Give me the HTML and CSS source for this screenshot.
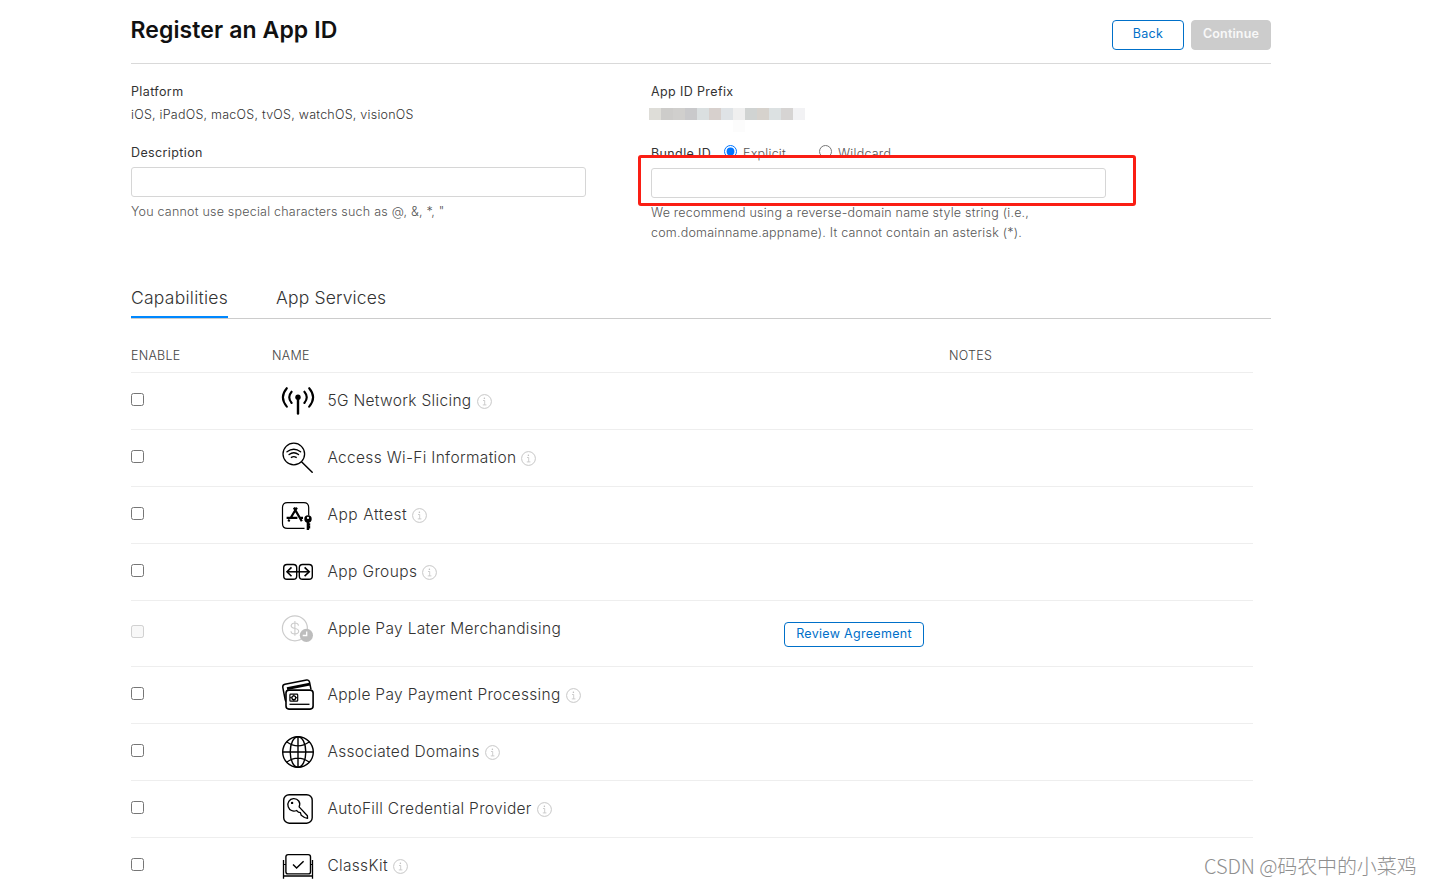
FILE: index.html
```html
<!DOCTYPE html>
<html lang="en">
<head>
    <meta charset="utf-8">
    <meta name="viewport" content="width=device-width, initial-scale=1">
    <title>Register an App ID</title>
    <link rel="stylesheet" href="styles.css">
</head>
<body>
    <svg class="defs" width="0" height="0">
        <symbol id="info" viewBox="0 0 15 15">
            <circle cx="7.5" cy="7.5" r="6.9" fill="none" stroke="#c6c6c6" stroke-width="1"/>
            <path d="M6 6.5h1.7v4.3M5.8 10.9h3.6" fill="none" stroke="#c0c0c0" stroke-width=".8"/>
            <circle cx="7.4" cy="4.2" r=".75" fill="#bbb"/>
        </symbol>
    </svg>

    <div class="container">
        <header class="header">
            <h1>Register an App ID</h1>
            <div class="buttons">
                <button class="btn btn-back">Back</button>
                <button class="btn btn-continue" disabled>Continue</button>
            </div>
        </header>

        <form class="form">
            <div class="col">
                <div class="label">Platform</div>
                <div class="value">iOS, iPadOS, macOS, tvOS, watchOS, visionOS</div>
                <div class="label-row"><label class="label" for="description">Description</label></div>
                <input class="text-input" type="text" id="description">
                <p class="hint">You cannot use special characters such as @, &amp;, *, "</p>
            </div>
            <div class="col">
                <div class="label">App ID Prefix</div>
                <div class="value mosaic">
                    <i class="m1"></i><i class="m2"></i><i class="m3"></i><i class="m4"></i><i class="m5"></i><i class="m6"></i><i class="m7"></i><i class="m8"></i><i class="m9"></i><i class="m10"></i><i class="m11"></i><i class="m12"></i><i class="m13"></i>
                </div>
                <div class="label-row bundle">
                    <span class="label">Bundle ID</span>
                    <input type="radio" name="bundle" id="explicit" checked><label for="explicit">Explicit</label>
                    <input type="radio" name="bundle" id="wildcard" class="wildcard"><label for="wildcard">Wildcard</label>
                </div>
                <div class="field">
                    <input class="text-input" type="text" id="bundleId">
                    <div class="marker"></div>
                </div>
                <p class="hint">We recommend using a reverse-domain name style string (i.e.,<br>com.domainname.appname). It cannot contain an asterisk (*).</p>
            </div>
        </form>

        <nav class="tabs">
            <a class="tab active">Capabilities</a>
            <a class="tab services">App Services</a>
        </nav>

        <div class="table">
            <div class="row head">
                <span>ENABLE</span>
                <span>NAME</span>
                <span></span>
                <span>NOTES</span>
            </div>

            <div class="row">
                <input type="checkbox">
                <svg class="icon" viewBox="0 0 34 34" fill="none" stroke="#000">
                    <path d="M5.8 4.2Q-2 13.3 5.8 22.6M10.6 7.7q-4.7 5.5 0 11.3M28.2 4.2q7.8 9.1 0 18.4M23.4 7.7q4.7 5.5 0 11.3" stroke-width="2.1" stroke-linecap="round"/>
                    <path d="M17 13v16.6" stroke-width="2.4" stroke-linecap="round"/>
                    <circle cx="17" cy="13.3" r="2.7" fill="#000" stroke="none"/>
                </svg>
                <div class="name">5G Network Slicing<svg class="info"><use href="#info"/></svg></div>
            </div>

            <div class="row">
                <input type="checkbox">
                <svg class="icon" viewBox="0 0 34 34" fill="none" stroke="#000">
                    <circle cx="12.8" cy="13" r="10.8" stroke-width="1.3"/>
                    <path d="M20.5 20.7 31.2 31.2" stroke-width="1.5" stroke-linecap="round"/>
                    <path d="M6 10.8q6.8-5 13.6 0M8.1 13.5q4.7-3.4 9.4 0M10.4 16.4q2.4-1.6 4.8 0" stroke-width="1.4" stroke-linecap="round"/>
                </svg>
                <div class="name">Access Wi-Fi Information<svg class="info"><use href="#info"/></svg></div>
            </div>

            <div class="row">
                <input type="checkbox">
                <svg class="icon" viewBox="0 0 34 34" fill="none" stroke="#000">
                    <path d="M27.7 17.6V9.5Q27.7 4.6 22.8 4.6H6.4Q1.5 4.6 1.5 9.5V25.5Q1.5 30.4 6.4 30.4H23.5" stroke-width="1.2"/>
                    <path d="M15.9 9.6 9.1 20.8M12.9 9.6 20.8 23.2M5.6 19.8H16.4M8.4 21.5 7.4 23.4M18.8 19.8H22" stroke-width="2.2"/>
                    <circle cx="27" cy="21" r="3.7" fill="#000" stroke="none"/>
                    <circle cx="27" cy="19.9" r="1.1" fill="#fff" stroke="none"/>
                    <path d="M26.9 23.7v8.2M27.5 26.5h1.7M27.5 29.3h1.7" stroke-width="2.4"/>
                </svg>
                <div class="name attest">App Attest<svg class="info"><use href="#info"/></svg></div>
            </div>

            <div class="row">
                <input type="checkbox">
                <svg class="icon" viewBox="0 0 34 34" fill="none" stroke="#000">
                    <rect x="2.7" y="9.5" width="13" height="14.8" rx="3.3" stroke-width="1.4"/>
                    <rect x="18.3" y="9.5" width="13" height="14.8" rx="3.3" stroke-width="1.4"/>
                    <path d="M6 16.8h22.2" stroke-width="1.5"/>
                    <path d="M10.5 12.4 6 16.8l4.5 4.4M23.6 12.4l4.6 4.4-4.6 4.4" stroke-width="1.6"/>
                </svg>
                <div class="name groups">App Groups<svg class="info"><use href="#info"/></svg></div>
            </div>

            <div class="row tall">
                <input type="checkbox" disabled>
                <svg class="icon" viewBox="0 0 34 34" fill="none" stroke="#ccc">
                    <circle cx="13.9" cy="16.3" r="12.5" stroke-width="1.2"/>
                    <path d="M17.6 13.6Q17.1 11 13.9 11T10.1 13.6Q10.1 15.8 13.9 16.5T17.7 19.3Q17.6 21.9 13.9 21.9T10 19.2M13.9 9.1V23.8" stroke-width="1.1"/>
                    <circle cx="25.4" cy="23.3" r="6.6" fill="#bdbdbd" stroke="none"/>
                    <path d="M25.7 19.4v4.1h-4" stroke="#fff" stroke-width="1.3"/>
                </svg>
                <div class="name">Apple Pay Later Merchandising</div>
                <button class="btn btn-review">Review Agreement</button>
            </div>

            <div class="row">
                <input type="checkbox">
                <svg class="icon" viewBox="0 .6 34 34" fill="none" stroke="#000">
                    <path d="M5.8 24.2Q4.5 24 4.2 22.4L1.8 9.9Q1.4 7.4 3.9 6.9L25.6 2.6Q28 2.2 28.5 4.6L30 12" stroke-width="1.5"/>
                    <path d="M6 11.2 28.8 6.7" stroke-width="3"/>
                    <rect x="5" y="12.7" width="27.1" height="19" rx="3" fill="#fff" stroke-width="1.6"/>
                    <path d="M8.5 26.9h20" stroke-width="1.3"/>
                    <rect x="8.9" y="16.8" width="7.8" height="7" rx=".8" stroke-width="1.2"/>
                    <path d="M9 20.3h1.8m4 0h1.8M12.8 17v1.7m0 3.2v1.8" stroke-width="1"/>
                    <circle cx="12.8" cy="20.3" r="1.9" stroke-width="1.3"/>
                </svg>
                <div class="name">Apple Pay Payment Processing<svg class="info"><use href="#info"/></svg></div>
            </div>

            <div class="row">
                <input type="checkbox">
                <svg class="icon" viewBox="0 0 34 34" fill="none" stroke="#000" stroke-width="1.4">
                    <circle cx="17" cy="17" r="15.3"/>
                    <ellipse cx="17" cy="17" rx="7.8" ry="15.3"/>
                    <path d="M17 1.7v30.6M1.7 17h30.6M5.5 6.8Q17 15 28.5 6.8M5.5 27.2Q17 19 28.5 27.2"/>
                </svg>
                <div class="name">Associated Domains<svg class="info"><use href="#info"/></svg></div>
            </div>

            <div class="row">
                <input type="checkbox">
                <svg class="icon" viewBox="0 0 34 34" fill="none" stroke="#000">
                    <rect x="2.7" y="2.7" width="28.5" height="28.5" rx="5.5" stroke-width="1.4"/>
                    <path d="M18.1 14.9C20.2 10.4 16.9 6.4 12.4 6.7C8.5 7 5.8 10.9 7.2 14.7C8.4 18.3 12.1 20 15.5 18.5L17.3 20.1 19.4 20.6 20.2 23.2 23.5 25.5 26.6 26.4 26.4 23.7Z" stroke-width="1.3" stroke-linejoin="round"/>
                    <circle cx="11.1" cy="10.9" r="1.2" fill="#000" stroke="none"/>
                </svg>
                <div class="name">AutoFill Credential Provider<svg class="info"><use href="#info"/></svg></div>
            </div>

            <div class="row">
                <input type="checkbox">
                <svg class="icon" viewBox="0 0 34 34" fill="none" stroke="#000">
                    <rect x="4.9" y="5.6" width="24.6" height="19.3" rx="2.2" stroke-width="1.4"/>
                    <path d="M2.5 11.1v18.6M31.5 11.1v18.6M2.5 27h29" stroke-width="1.3"/>
                    <path d="M2.5 15.5h2.4M29.5 15.5h2" stroke-width="1"/>
                    <path d="m12 15.5 3.6 3.5 7-6.7" stroke-width="1.5"/>
                </svg>
                <div class="name">ClassKit<svg class="info"><use href="#info"/></svg></div>
            </div>
        </div>
    </div>

    <div class="watermark">CSDN @码农中的小菜鸡</div>
</body>
</html>
```
FILE: styles.css
```css
* {
    box-sizing: border-box;
}
body {
    margin: 0;
    height: 885px;
    overflow: hidden;
    position: relative;
    background: #fff;
    color: #333;
    font-family: Inter, "Liberation Sans", sans-serif;
    font-size: 12.5px;
    letter-spacing: 0.24px;
}
.defs {
    position: absolute;
}
.container {
    width: 1140px;
    margin-left: 131px;
}
.header {
    display: flex;
    justify-content: space-between;
    align-items: flex-start;
    height: 64px;
    border-bottom: 1px solid #d9d9d9;
}
h1 {
    margin: 15px 0 0 -0.5px;
    font-size: 23px;
    line-height: 30px;
    font-weight: 600;
    letter-spacing: 0.1px;
    color: #111;
}
.buttons {
    display: flex;
    gap: 7px;
    padding-top: 20px;
}
.btn {
    font-family: inherit;
    font-size: 12.5px;
    letter-spacing: 0.3px;
    color: #0070c9;
    background: #fff;
    border: 1px solid #0070c9;
    border-radius: 4px;
    padding: 0 0 3px;
}
.btn-back {
    width: 72px;
    height: 30px;
}
.btn-continue {
    width: 80px;
    height: 30px;
    background: #ccc;
    border-color: #ccc;
    color: #f8f8f8;
    font-weight: 600;
    letter-spacing: 0.15px;
}
.form {
    display: flex;
    height: 214px;
    padding-top: 18px;
}
.col {
    width: 520px;
}
.label {
    line-height: 20px;
    letter-spacing: 0.38px;
    color: #333;
}
.value {
    height: 20px;
    margin-top: 3px;
    line-height: 20px;
    font-weight: 300;
}
.label-row {
    display: flex;
    align-items: center;
    height: 20px;
    margin: 18px 0 4px;
}
.bundle {
    margin: 18px 0 5px;
    font-weight: 300;
    color: #555;
}
.bundle .label {
    width: 73px;
    padding-top: 2px;
    font-weight: 400;
}
.bundle input {
    margin: 0 6px 3px 0;
}
.bundle .wildcard {
    margin-left: 33px;
}
.text-input {
    display: block;
    width: 455px;
    height: 30px;
    border: 1px solid #d6d6d6;
    border-radius: 3px;
}
.field {
    position: relative;
}
.marker {
    position: absolute;
    left: -13px;
    top: -13px;
    width: 498px;
    height: 51px;
    border: 3px solid #fa1e14;
    border-radius: 3px;
}
.hint {
    margin: 5px 0 0;
    line-height: 20px;
    font-weight: 300;
    letter-spacing: 0.22px;
    color: #555;
}
.mosaic {
    display: flex;
    margin-left: -2px;
    padding-top: 3px;
}
.mosaic i {
    width: 12px;
    height: 12px;
}
.m1 { background: #deddd8; }
.m2 { background: #cdccca; }
.m3 { background: #d0cfcd; }
.m4 { background: #c9c9cb; }
.m5 { background: #dadfe0; }
.m6 { background: #d7d0cd; }
.m7 { background: #dfe3e6; }
.m8 { background: #efefef; box-shadow: 0 12px #fcfcfc; }
.m9 { background: #d0d3d2; }
.m10 { background: #d6d2cd; }
.m11 { background: #dce1e2; }
.m12 { background: #d6d4d3; }
.m13 { background: #f2f2f4; }
.tabs {
    display: flex;
    gap: 48px;
    height: 41px;
    border-bottom: 1px solid #ccc;
}
.tab {
    height: 40px;
    line-height: 40px;
    font-size: 17.5px;
    font-weight: 300;
    letter-spacing: 0.26px;
}
.tab.active {
    border-bottom: 2px solid #0088ff;
}
.tab.services {
    letter-spacing: 0.15px;
}
.table {
    width: 1122px;
}
.row {
    display: grid;
    grid-template-columns: 150px 46.4px 456.6px auto;
    height: 57px;
    border-bottom: 1px solid #eee;
}
.row input {
    margin: 20px 0 0;
    width: 13px;
    height: 13px;
}
.head {
    grid-template-columns: 141px 512px 165px auto;
    height: 54px;
    padding-top: 27px;
    line-height: 20px;
    font-weight: 300;
    color: #444;
}
.tall {
    height: 66px;
}
.tall input {
    margin-top: 24px;
}
.icon {
    width: 34px;
    height: 34px;
    margin-top: 11px;
}
.name {
    display: flex;
    height: 24px;
    margin-top: 16px;
    line-height: 24px;
    font-size: 15.5px;
    font-weight: 300;
    letter-spacing: 0.32px;
    white-space: nowrap;
}
.name.attest {
    letter-spacing: 0.58px;
}
.name.groups {
    letter-spacing: 0.4px;
}
.info {
    width: 15px;
    height: 15px;
    margin: 5px 0 0 5px;
}
.btn-review {
    width: 140px;
    height: 25px;
    margin-top: 21px;
    padding-bottom: 2px;
}
.watermark {
    position: absolute;
    left: 1204px;
    top: 851px;
    line-height: 30px;
    font-family: "Noto Sans CJK SC", sans-serif;
    font-size: 20px;
    font-weight: 300;
    letter-spacing: -0.1px;
    color: #8f8f8f;
    white-space: nowrap;
}
```
